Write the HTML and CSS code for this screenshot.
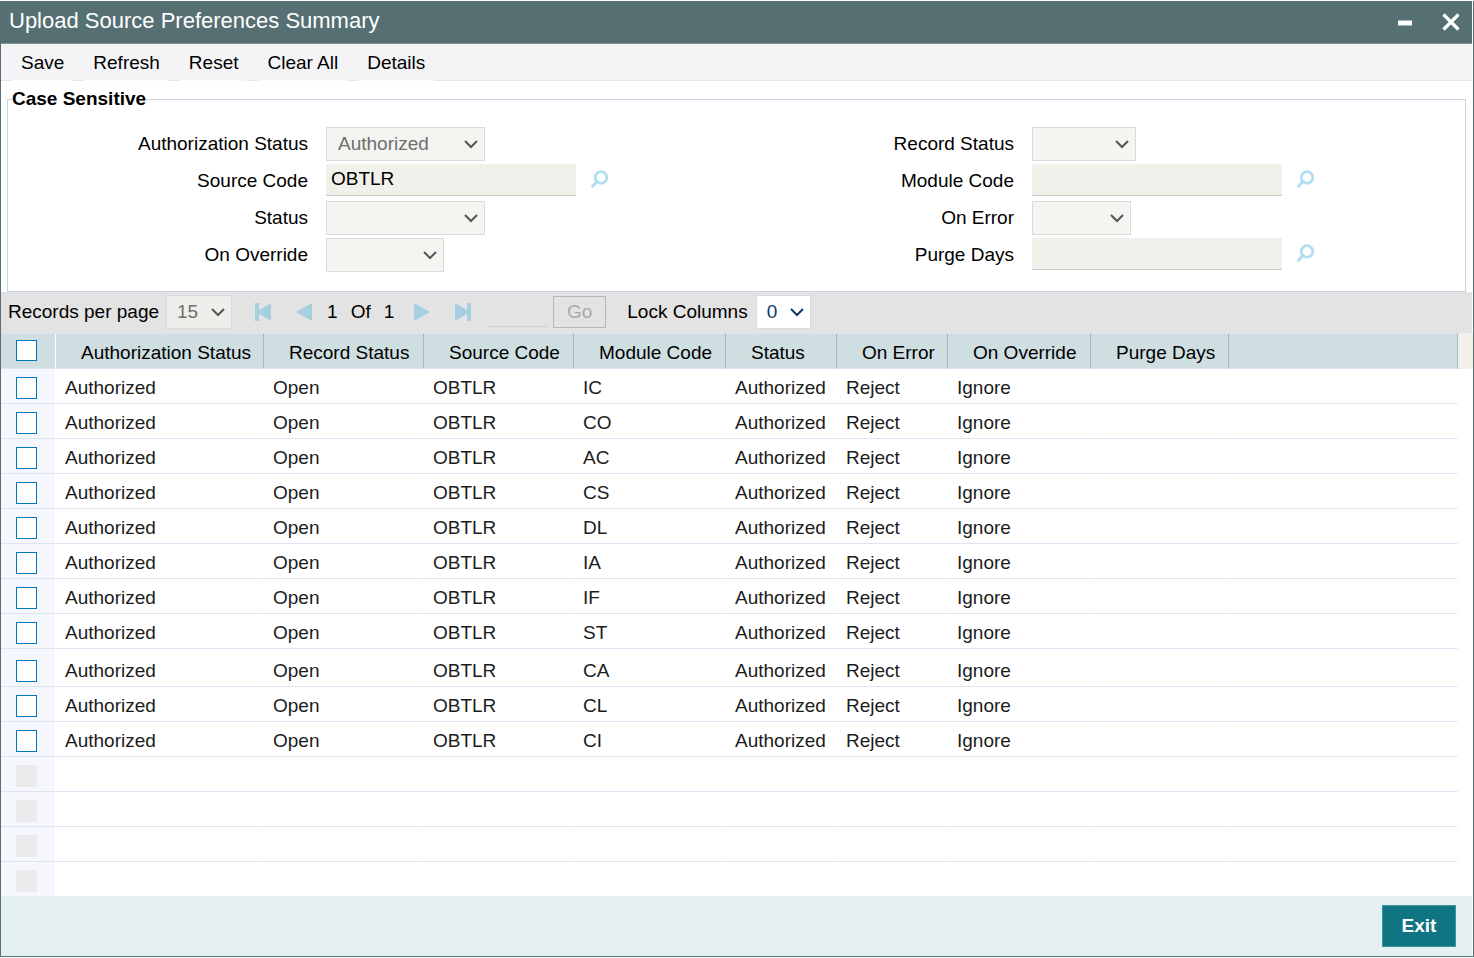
FILE: index.html
```html
<!DOCTYPE html>
<html lang="en">
<head>
    <meta charset="UTF-8">
    <meta name="viewport" content="width=device-width, initial-scale=1.0">
    <title>Upload Source Preferences Summary</title>
    <link rel="stylesheet" href="styles.css">
</head>
<body>
    <div class="window">
        <div class="title-bar">
            <h1 class="title">Upload Source Preferences Summary</h1>
            <button class="title-btn" type="button" aria-label="Minimize">
                <svg width="20" height="20" viewBox="0 0 20 20"><path d="M3 11h14" stroke="#fff" stroke-width="5"/></svg>
            </button>
            <button class="title-btn" type="button" aria-label="Close">
                <svg width="20" height="20" viewBox="0 0 20 20"><path d="M2.500 2.500l15 15M17.500 2.500l-15 15" stroke="#fff" stroke-width="3.200"/></svg>
            </button>
        </div>

        <div class="toolbar">
            <button class="tool-btn" type="button">Save</button>
            <button class="tool-btn" type="button">Refresh</button>
            <button class="tool-btn" type="button">Reset</button>
            <button class="tool-btn" type="button">Clear All</button>
            <button class="tool-btn" type="button">Details</button>
        </div>

        <fieldset class="search">
            <legend>Case Sensitive</legend>
            <div class="search-grid">
                <label for="authStatus">Authorization Status</label>
                <select id="authStatus" class="select w-large" disabled><option>Authorized</option></select>
                <label for="recordStatus">Record Status</label>
                <select id="recordStatus" class="select w-medium" disabled><option></option></select>

                <label for="sourceCode">Source Code</label>
                <div class="lov">
                    <input id="sourceCode" class="input" type="text" value="OBTLR" readonly>
                    <button class="lov-btn" type="button" aria-label="Find source code">
                        <svg width="20" height="20" viewBox="0 0 20 20"><circle cx="13" cy="7.500" r="5.800" fill="none" stroke="#b2dff0" stroke-width="2.800"/><path d="M9 11.500l-4.300 4.500" stroke="#b2dff0" stroke-width="3.200" stroke-linecap="round"/></svg>
                    </button>
                </div>
                <label for="moduleCode">Module Code</label>
                <div class="lov">
                    <input id="moduleCode" class="input" type="text" readonly>
                    <button class="lov-btn" type="button" aria-label="Find module code">
                        <svg width="20" height="20" viewBox="0 0 20 20"><circle cx="13" cy="7.500" r="5.800" fill="none" stroke="#b2dff0" stroke-width="2.800"/><path d="M9 11.500l-4.300 4.500" stroke="#b2dff0" stroke-width="3.200" stroke-linecap="round"/></svg>
                    </button>
                </div>

                <label for="status">Status</label>
                <select id="status" class="select w-large" disabled><option></option></select>
                <label for="onError">On Error</label>
                <select id="onError" class="select w-small" disabled><option></option></select>

                <label for="onOverride">On Override</label>
                <select id="onOverride" class="select w-override" disabled><option></option></select>
                <label for="purgeDays">Purge Days</label>
                <div class="lov">
                    <input id="purgeDays" class="input" type="text" readonly>
                    <button class="lov-btn" type="button" aria-label="Find purge days">
                        <svg width="20" height="20" viewBox="0 0 20 20"><circle cx="13" cy="7.500" r="5.800" fill="none" stroke="#b2dff0" stroke-width="2.800"/><path d="M9 11.500l-4.300 4.500" stroke="#b2dff0" stroke-width="3.200" stroke-linecap="round"/></svg>
                    </button>
                </div>
            </div>
        </fieldset>

        <div class="pager">
            <label for="pageSize">Records per page</label>
            <select id="pageSize" class="select page-size" disabled><option>15</option></select>
            <div class="pager-nav">
                <button class="nav-btn" type="button" aria-label="First page">
                    <svg width="16" height="18" viewBox="0 0 16 18"><path d="M0 0h4v7l12-7v18l-12-7v7h-4z" fill="#a6cfdf"/></svg>
                </button>
                <button class="nav-btn" type="button" aria-label="Previous page">
                    <svg width="16" height="18" viewBox="0 0 16 18"><path d="M16 0v18l-16-9z" fill="#a6cfdf"/></svg>
                </button>
            </div>
            <div class="page-info"><span>1</span><span>Of</span><span>1</span></div>
            <div class="pager-nav">
                <button class="nav-btn" type="button" aria-label="Next page">
                    <svg width="16" height="18" viewBox="0 0 16 18"><path d="M0 0v18l16-9z" fill="#a6cfdf"/></svg>
                </button>
                <button class="nav-btn" type="button" aria-label="Last page">
                    <svg width="16" height="18" viewBox="0 0 16 18"><path d="M0 0l12 7v-7h4v18h-4v-7l-12 7z" fill="#a6cfdf"/></svg>
                </button>
            </div>
            <input class="goto" type="text" aria-label="Go to page" disabled>
            <button class="go-btn" type="button" disabled>Go</button>
            <label for="lockColumns">Lock Columns</label>
            <select id="lockColumns" class="select lock"><option>0</option></select>
        </div>

        <table class="results">
            <colgroup>
                <col class="col-check">
                <col class="col-auth">
                <col class="col-record">
                <col class="col-source">
                <col class="col-module">
                <col class="col-status">
                <col class="col-error">
                <col class="col-override">
                <col class="col-purge">
                <col>
                <col class="col-gutter">
            </colgroup>
            <thead>
                <tr>
                    <th class="check"><input type="checkbox" aria-label="Select all"></th>
                    <th>Authorization Status</th>
                    <th>Record Status</th>
                    <th>Source Code</th>
                    <th>Module Code</th>
                    <th>Status</th>
                    <th>On Error</th>
                    <th>On Override</th>
                    <th>Purge Days</th>
                    <th></th>
                    <th class="gutter"></th>
                </tr>
            </thead>
            <tbody id="rows"></tbody>
        </table>

        <div class="footer">
            <button class="exit-btn" type="button">Exit</button>
        </div>
    </div>

    <script src="script.js"></script>
</body>
</html>
```
FILE: styles.css
```css
* {
    box-sizing: border-box;
}
body {
    margin: 0;
    background: #fff;
    color: #000;
    font-family: 'Liberation Sans', Arial, sans-serif;
    font-size: 19px;
    line-height: 22px;
}
button, input, select {
    margin: 0;
    font: inherit;
    color: inherit;
}
button {
    padding: 0;
    border: none;
    background: none;
    cursor: pointer;
}
svg {
    display: block;
}
.window {
    margin-top: 1px;
    border: 1px solid #566f73;
    border-top: none;
}

/* title bar */
.title-bar {
    display: flex;
    align-items: center;
    gap: 26px;
    height: 43px;
    margin-right: 1px;
    padding: 0 11px 0 8px;
    background: #566f73;
    border-bottom: 1px solid #7e9195;
}
.title {
    flex: 1;
    margin: 0;
    padding-bottom: 3px;
    color: #fff;
    font-size: 22px;
    font-weight: normal;
    line-height: 26px;
}

/* toolbar */
.toolbar {
    display: flex;
    gap: 11px;
    height: 37px;
    margin-right: 1px;
    padding-left: 11px;
    background: #f4f4f6;
    border-bottom: 1px solid #e6e6e8;
}
.tool-btn {
    height: 37px;
    padding: 2px 9px 0;
    border-bottom: 1px solid #fafafb;
}

/* search form */
.search {
    min-width: 0;
    margin: 6px 7px 0 6px;
    padding: 0 0 19px;
    border: 1px solid #c6d5e3;
}
.search legend {
    margin-left: 4px;
    padding: 0;
    font-weight: bold;
    line-height: 24px;
}
.search-grid {
    display: grid;
    grid-template-columns: 300px 1fr 300px 1fr;
    grid-auto-rows: 34px;
    gap: 3px 18px;
    padding: 16px 63px 0 0;
}
.search-grid label {
    align-self: center;
    text-align: right;
}
.select {
    height: 34px;
    padding: 0 11px;
    appearance: none;
    border: 1px solid #dbdbdb;
    border-radius: 0;
    background: #f5f4f1 url("data:image/svg+xml,%3Csvg xmlns='http://www.w3.org/2000/svg' width='14' height='9'%3E%3Cpath d='M1 1l6 6 6-6' fill='none' stroke='%23555' stroke-width='2'/%3E%3C/svg%3E") no-repeat right 6px center;
}
.select:disabled {
    color: #6e6e6e;
    opacity: 1;
}
.w-large {
    width: 159px;
}
.w-override {
    width: 118px;
}
.w-medium {
    width: 104px;
}
.w-small {
    width: 99px;
}
.lov {
    display: flex;
    gap: 12px;
}
.input {
    width: 250px;
    height: 32px;
    padding: 0 5px 1px;
    border: none;
    border-bottom: 1px solid #c9c8c5;
    background: #f1f0eb;
}
.lov-btn {
    height: 32px;
}

/* pager */
.pager {
    display: flex;
    align-items: center;
    height: 41px;
    margin-right: 1px;
    padding: 0 0 1px 7px;
    background: #e3e3e3;
}
.page-size {
    width: 66px;
    margin: 0 23px 0 7px;
    padding: 0 10px;
    background-color: #efeeeb;
}
.pager-nav {
    display: flex;
    gap: 25px;
}
.page-info {
    display: flex;
    gap: 13px;
    padding: 0 20px 0 15px;
}
.goto {
    width: 60px;
    height: 30px;
    margin: 0 5px 0 17px;
    border: none;
    border-bottom: 1px solid #d0d0d0;
    background: none;
}
.go-btn {
    width: 53px;
    height: 32px;
    margin-right: 21px;
    border: 1px solid #b4b9be;
    color: #a9a9a9;
}
.lock {
    width: 55px;
    margin-left: 8px;
    padding: 0 10px;
    color: #0f3c66;
    background-color: #fff;
    background-image: url("data:image/svg+xml,%3Csvg xmlns='http://www.w3.org/2000/svg' width='14' height='9'%3E%3Cpath d='M1 1l6 6 6-6' fill='none' stroke='%230f3c66' stroke-width='2'/%3E%3C/svg%3E");
}

/* results */
.results {
    width: 100%;
    table-layout: fixed;
    border-collapse: separate;
    border-spacing: 0;
}
.col-check {
    width: 55px;
}
.col-auth {
    width: 208px;
}
.col-record {
    width: 160px;
}
.col-source {
    width: 150px;
}
.col-module {
    width: 152px;
}
.col-status,
.col-error {
    width: 111px;
}
.col-override {
    width: 143px;
}
.col-purge {
    width: 138px;
}
.col-gutter {
    width: 15px;
}
.results th {
    height: 36px;
    padding: 3px 0 0 25px;
    border: solid #dde3f3;
    border-width: 1px 1px 1px 0;
    border-right-color: #9fb9bc;
    background: #cfdee1;
    font-weight: normal;
    text-align: left;
    white-space: nowrap;
}
.results td {
    height: 35px;
    padding: 4px 0 0 9px;
    border: solid #dde3f3;
    border-width: 0 1px 1px 0;
    border-right-color: #fff;
    color: #1c1c1c;
    white-space: nowrap;
}
.results .check {
    padding: 0 0 1px 15px;
    border-right-color: #fff;
}
.results td.check {
    padding: 4px 0 0 15px;
    background: #f6f7fd;
}
.results .gutter {
    padding: 0;
    border: none;
}
.results th.gutter {
    background: #f1f0eb;
}
.results .group-start td {
    height: 38px;
    padding-top: 7px;
}
.results tr:last-child td {
    height: 34px;
    border-bottom: none;
}
.check input {
    display: block;
    width: 21px;
    height: 22px;
    appearance: none;
    border: 1px solid #0079b8;
    background: #fff;
}
.check input:checked {
    background: #0079b8;
}
.check input:disabled {
    border-color: #ebebed;
    background: #ebebed;
}
.results th.check input {
    height: 21px;
}

/* footer */
.footer {
    display: flex;
    justify-content: flex-end;
    margin-right: 1px;
    padding: 9px 16px;
    background: #e5f0f3;
}
.exit-btn {
    width: 74px;
    height: 42px;
    border: 1px solid #3f919c;
    background: #0f7583;
    color: #fff;
    font-weight: bold;
}
```
FILE: script.js
```js
const modules = ['IC', 'CO', 'AC', 'CS', 'DL', 'IA', 'IF', 'ST', 'CA', 'CL', 'CI'];
const pageSize = 15;
const tbody = document.getElementById('rows');

// fill one page, rows without a record stay blank
for (let i = 0; i < pageSize; i++) {
    const tr = document.createElement('tr');
    const code = modules[i];
    const cells = code ? ['Authorized', 'Open', 'OBTLR', code, 'Authorized', 'Reject', 'Ignore', '', ''] : Array(9).fill('');

    if (i === 8) {
        tr.className = 'group-start';
    }
    tr.innerHTML = `<td class="check"><input type="checkbox" aria-label="Select row ${i + 1}" ${code ? '' : 'disabled'}></td>`
        + cells.map(text => `<td>${text}</td>`).join('')
        + (i === 0 ? `<td class="gutter" rowspan="${pageSize}"></td>` : '');
    tbody.appendChild(tr);
}
```
